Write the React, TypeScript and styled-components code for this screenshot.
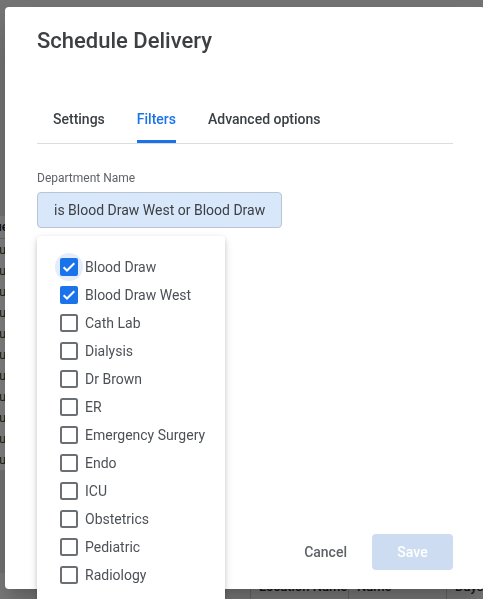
import React from 'react';
import styled, { createGlobalStyle } from 'styled-components';

const GlobalStyle = createGlobalStyle`
  html, body {
    margin: 0;
    padding: 0;
    overflow: hidden;
    font-family: Roboto, "Noto Sans", Arial, sans-serif;
  }
`;

// the page behind the modal, mostly hidden
const Page = styled.div`
  display: flex;
  flex-direction: column;
  width: 483px;
  height: 599px;
  background: #ececec;
`;

const PageTop = styled.div`
  height: 216px;
  background: #e6e6e6;
`;

const PageTable = styled.div`
  display: flex;
  flex-direction: column;
  background: #fff;
`;

const PageHeadCell = styled.div`
  height: 22px;
  line-height: 22px;
  font-size: 13px;
  font-weight: 500;
  color: #222;
  margin-left: -24px;
  border-bottom: 1px solid #d0d0d0;
`;

const PageRow = styled.div`
  height: 21px;
  line-height: 21px;
  font-size: 13px;
  color: #3a3a10;
  margin-left: -1px;
`;

const PageGap = styled.div`
  flex: 1;
  background: #e4e4e4;
`;

const PageHeader = styled.div`
  display: grid;
  grid-template-columns: 250px 98px 98px 1fr;
  height: 26px;
  background: #f4f4f4;
`;

const PageHeaderCell = styled.div<{ $line?: boolean }>`
  padding: 6px 0 0 8px;
  font-size: 13px;
  font-weight: 500;
  color: #222;
  border-left: ${(p) => (p.$line ? '1px solid #c8c8c8' : 'none')};
  white-space: nowrap;
  overflow: hidden;
`;

const Overlay = styled.div`
  position: fixed;
  inset: 0;
  background: rgba(0, 0, 0, 0.5);
`;

const Dialog = styled.div`
  position: fixed;
  left: 5px;
  top: 7px;
  width: 480px;
  height: 582px;
  box-sizing: border-box;
  padding: 20px 32px 19px;
  background: #fff;
  border-radius: 4px;
  display: flex;
  flex-direction: column;
  box-shadow: 0 11px 15px -7px rgba(0, 0, 0, 0.2), 0 24px 38px 3px rgba(0, 0, 0, 0.14);
`;

const Title = styled.h2`
  margin: 0;
  font-size: 22px;
  line-height: 28px;
  font-weight: 500;
  color: #3c4043;
`;

const TabBar = styled.div`
  display: flex;
  margin-top: 40px;
  border-bottom: 1px solid #dadce0;
`;

const Tab = styled.div<{ $active?: boolean }>`
  height: 48px;
  padding: 0 16px;
  display: flex;
  align-items: center;
  font-size: 14px;
  font-weight: 500;
  color: ${(p) => (p.$active ? '#1a73e8' : '#3c4043')};
`;

const TabLabel = styled.span<{ $active?: boolean }>`
  height: 48px;
  line-height: 48px;
  box-sizing: border-box;
  border-bottom: 3px solid ${(p) => (p.$active ? '#1a73e8' : 'transparent')};
`;

const Field = styled.div`
  position: relative;
  margin-top: 26px;
`;

const Label = styled.div`
  font-size: 12px;
  line-height: 16px;
  color: #5f6368;
`;

const Select = styled.div`
  margin-top: 6px;
  width: 245px;
  height: 36px;
  box-sizing: border-box;
  padding: 0 16px;
  display: flex;
  align-items: center;
  background: #d9e7fb;
  border: 1px solid #b9c4d4;
  border-radius: 4px;
  font-size: 14px;
  color: #3c4043;
  white-space: nowrap;
  overflow: hidden;
`;

const Menu = styled.div`
  position: absolute;
  left: 0;
  top: 66px;
  width: 188px;
  height: 400px;
  padding-top: 17px;
  box-sizing: border-box;
  background: #fff;
  border-radius: 4px;
  box-shadow: 0 2px 4px rgba(0, 0, 0, 0.14), 0 3px 10px rgba(0, 0, 0, 0.12);
  z-index: 2;
`;

const Option = styled.div`
  display: flex;
  align-items: center;
  height: 28px;
  padding-left: 23px;
  gap: 7px;
  font-size: 14px;
  color: #4d5156;
`;

const BoxWrap = styled.div<{ $focus?: boolean }>`
  width: 18px;
  height: 18px;
  display: flex;
  align-items: center;
  justify-content: center;
  border-radius: 50%;
  box-shadow: ${(p) => (p.$focus ? '0 0 0 5px #e3edfc' : 'none')};
  background: ${(p) => (p.$focus ? '#e3edfc' : 'transparent')};
`;

const Footer = styled.div`
  margin-top: auto;
  display: flex;
  justify-content: flex-end;
  gap: 9px;
`;

const TextButton = styled.button`
  height: 36px;
  padding: 0 16px;
  border: none;
  background: transparent;
  font-family: inherit;
  font-size: 14px;
  font-weight: 500;
  color: #5f6368;
`;

const PrimaryButton = styled.button<{ $disabled?: boolean }>`
  width: 81px;
  height: 36px;
  border: none;
  border-radius: 4px;
  font-family: inherit;
  font-size: 14px;
  font-weight: 500;
  color: #fff;
  background: ${(p) => (p.$disabled ? '#cddcf0' : '#1a73e8')};
`;

function CheckBox({ checked }: { checked: boolean }) {
  return (
    <svg width="18" height="18" viewBox="0 0 18 18">
      {checked ? (
        <>
          <rect x="0" y="0" width="18" height="18" rx="2" fill="#1a73e8" />
          <path d="M3.6 9.2l3.4 3.3 7.3-7.2" fill="none" stroke="#fff" strokeWidth="2" />
        </>
      ) : (
        <rect x="1" y="1" width="16" height="16" rx="1.5" fill="#fff" stroke="#6b6f74" strokeWidth="2" />
      )}
    </svg>
  );
}

const departments = [
  { name: 'Blood Draw', checked: true },
  { name: 'Blood Draw West', checked: true },
  { name: 'Cath Lab', checked: false },
  { name: 'Dialysis', checked: false },
  { name: 'Dr Brown', checked: false },
  { name: 'ER', checked: false },
  { name: 'Emergency Surgery', checked: false },
  { name: 'Endo', checked: false },
  { name: 'ICU', checked: false },
  { name: 'Obstetrics', checked: false },
  { name: 'Pediatric', checked: false },
  { name: 'Radiology', checked: false },
];

const bgRows = Array.from({ length: 11 }, (_, i) => i);

export default function App() {
  return (
    <>
      <GlobalStyle />
      <Page>
        <PageTop />
        <PageTable>
          <PageHeadCell>Value</PageHeadCell>
          {bgRows.map((i) => (
            <PageRow key={i}>unassigned</PageRow>
          ))}
        </PageTable>
        <PageGap />
        <PageHeader>
          <PageHeaderCell />
          <PageHeaderCell $line>Location Name</PageHeaderCell>
          <PageHeaderCell $line>Name</PageHeaderCell>
          <PageHeaderCell $line>Days</PageHeaderCell>
        </PageHeader>
      </Page>
      <Overlay />
      <Dialog>
        <Title>Schedule Delivery</Title>
        <TabBar>
          <Tab>
            <TabLabel>Settings</TabLabel>
          </Tab>
          <Tab $active>
            <TabLabel $active>Filters</TabLabel>
          </Tab>
          <Tab>
            <TabLabel>Advanced options</TabLabel>
          </Tab>
        </TabBar>
        <Field>
          <Label>Department Name</Label>
          <Select>is Blood Draw West or Blood Draw</Select>
          <Menu>
            {departments.map((d, i) => (
              <Option key={d.name}>
                <BoxWrap $focus={i === 0}>
                  <CheckBox checked={d.checked} />
                </BoxWrap>
                {d.name}
              </Option>
            ))}
          </Menu>
        </Field>
        <Footer>
          <TextButton>Cancel</TextButton>
          <PrimaryButton $disabled>Save</PrimaryButton>
        </Footer>
      </Dialog>
    </>
  );
}
